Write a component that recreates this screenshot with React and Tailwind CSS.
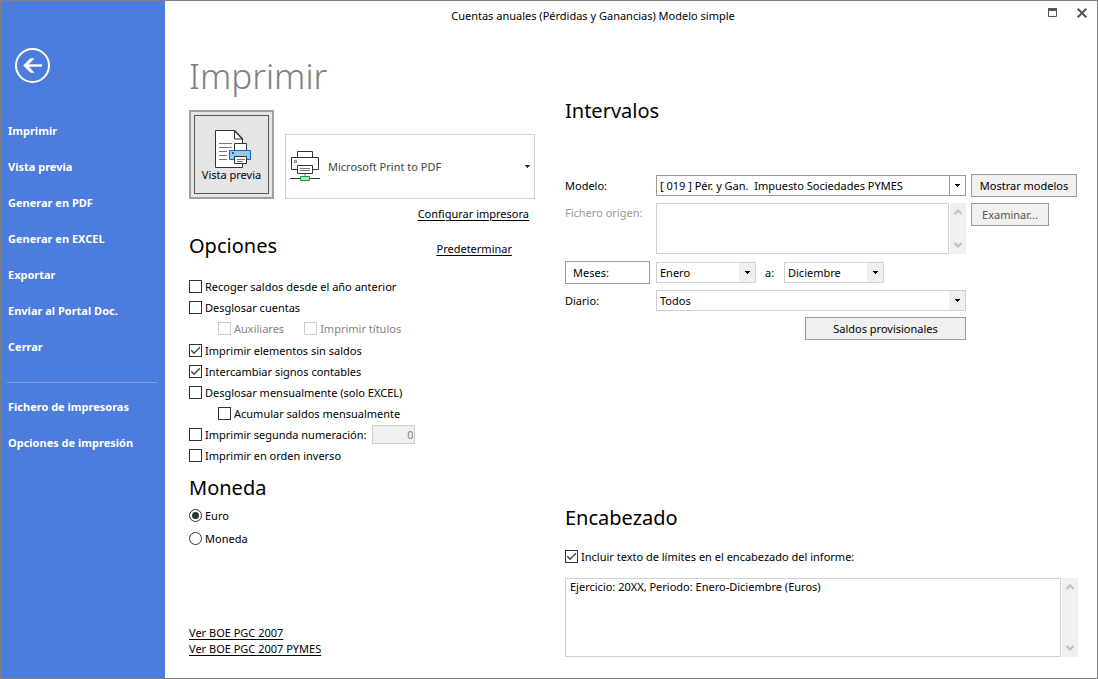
import React, { useState } from 'react';

const menuItems = [
  'Imprimir',
  'Vista previa',
  'Generar en PDF',
  'Generar en EXCEL',
  'Exportar',
  'Enviar al Portal Doc.',
  'Cerrar',
];

const setupItems = ['Fichero de impresoras', 'Opciones de impresión'];

const months = [
  'Enero', 'Febrero', 'Marzo', 'Abril', 'Mayo', 'Junio',
  'Julio', 'Agosto', 'Septiembre', 'Octubre', 'Noviembre', 'Diciembre',
];

const Check = ({ label, checked, onChange, disabled = false }) => (
  <label className={`flex h-[21px] items-center gap-[3px] whitespace-nowrap ${disabled ? 'text-[#838383]' : ''}`}>
    <span className="grid shrink-0">
      <input
        type="checkbox"
        checked={checked}
        onChange={onChange}
        disabled={disabled}
        className="peer col-start-1 row-start-1 h-[13px] w-[13px] appearance-none border border-[#333] bg-white disabled:border-[#ccc]"
      />
      <svg viewBox="0 0 13 13" className="pointer-events-none col-start-1 row-start-1 hidden h-[13px] w-[13px] peer-checked:block" fill="none" stroke="#444" strokeWidth="1.4">
        <path d="M2.3 6.3 5 9.2 10.9 3.3" />
      </svg>
    </span>
    {label}
  </label>
);

const Radio = ({ label, value, current, onChange }) => (
  <label className="flex h-[23px] items-center gap-[3px]">
    <span className="grid shrink-0">
      <input
        type="radio"
        name="moneda"
        value={value}
        checked={current === value}
        onChange={() => onChange(value)}
        className="peer col-start-1 row-start-1 h-[13px] w-[13px] appearance-none rounded-full border border-[#333] bg-white"
      />
      <span className="pointer-events-none col-start-1 row-start-1 hidden h-[7px] w-[7px] place-self-center rounded-full bg-[#333] peer-checked:block"></span>
    </span>
    {label}
  </label>
);

const Select = ({ id, label, options, value, onChange, className = '', frame = 'border-[#d0d0d0]', arrow = 'bg-[#f0f0f0]' }) => (
  <div className={`relative h-[21px] border bg-white ${frame} ${className}`}>
    <select
      id={id}
      aria-label={label}
      value={value}
      onChange={(e) => onChange(e.target.value)}
      className="block h-full w-full appearance-none whitespace-pre bg-transparent pr-5 pl-[3px] outline-none"
    >
      {options.map((o) => <option key={o} value={o}>{o}</option>)}
    </select>
    <span className={`pointer-events-none absolute inset-y-0 right-0 flex w-4 items-center justify-center ${arrow}`}>
      <svg width="5" height="3" viewBox="0 0 5 3" shapeRendering="crispEdges"><path d="M0 0h5v1H4v1H3v1H2V2H1V1H0z" /></svg>
    </span>
  </div>
);

// Disabled scroll bar shown beside the multi-line boxes
const ScrollTrack = () => (
  <div className="ml-px flex w-4 shrink-0 flex-col items-center justify-between bg-[#f0f0f0] py-[6px]">
    <svg width="8" height="6" viewBox="0 0 8 6" fill="none" stroke="#bfbfbf" strokeWidth="2"><path d="M.5 5 4 1.5 7.5 5" /></svg>
    <svg width="8" height="6" viewBox="0 0 8 6" fill="none" stroke="#bfbfbf" strokeWidth="2"><path d="M.5 1 4 4.5 7.5 1" /></svg>
  </div>
);

const PreviewIcon = () => (
  <svg width="37" height="38" viewBox="0 0 37 38" fill="none" className="ml-1">
    <path d="M.5.5h19l8 8v29H.5z" fill="#fff" stroke="#333" />
    <path d="M19.5.5v8.500h8" stroke="#333" />
    <path d="M19.500.5l8 8.500" stroke="#333" strokeWidth="1.5" />
    <path d="M4 13.500h13M4 17.500h13M4 21.500h8M4 25.500h8M4 29.500h8" stroke="#777" />
    <path d="M19.500 13.500h12v7h-12z" fill="#fff" stroke="#333" />
    <path d="M14.500 20.500h21v9h-21z" fill="#94c8ef" stroke="#0f64b4" />
    <path d="M17 22h2v2h-2z" fill="#0f64b4" />
    <path d="M19.500 26.500h12v7h-12z" fill="#fff" stroke="#333" />
    <path d="M22 29.500h8M22 31.500h6" stroke="#777" />
  </svg>
);

const NetworkPrinterIcon = () => (
  <svg width="30" height="31" viewBox="0 0 30 31" fill="none">
    <path d="M7.500.5h15v6h-15z" fill="#fff" stroke="#333" />
    <path d="M1.500 6.500h27v12h-27z" fill="#fff" stroke="#333" />
    <path d="M4.500 9.500h2v2h-2z" stroke="#777" />
    <path d="M7.500 14.500h15v8h-15z" fill="#fff" stroke="#333" />
    <path d="M10 17.500h10M10 19.500h10" stroke="#777" />
    <path d="M15 23v2" stroke="#bbb" strokeWidth="2" />
    <path d="M0 27.500h30" stroke="#333" />
    <path d="M10.500 25.500h9v4h-9z" fill="#b5e3c0" stroke="#109b3c" />
  </svg>
);

const buttonClass = 'h-[23px] border border-[#999] bg-[#f0f0f0] text-center';

export default function App() {
  const [options, setOptions] = useState({ sinSaldos: true, signos: true, limites: true });
  const [currency, setCurrency] = useState('euro');
  const [model, setModel] = useState('[ 019 ] Pér. y Gan.\u00a0 Impuesto Sociedades PYMES');
  const [from, setFrom] = useState('Enero');
  const [to, setTo] = useState('Diciembre');
  const [journal, setJournal] = useState('Todos');
  const [headerText, setHeaderText] = useState('Ejercicio: 20XX, Periodo: Enero-Diciembre (Euros)');

  const option = (key) => ({
    checked: !!options[key],
    onChange: () => setOptions((prev) => ({ ...prev, [key]: !prev[key] })),
  });

  return (
    <div className="flex min-h-screen border border-[#808080] bg-white font-['Noto_Sans','Open_Sans',sans-serif] text-[11px] leading-4 text-black">
      {/* Menu */}
      <nav className="w-[164px] shrink-0 bg-[#4c7cdc] pt-[47px] text-white">
        <button aria-label="Volver" className="ml-[14px] block">
          <svg width="35" height="35" viewBox="0 0 35 35" fill="none" stroke="#fff">
            <circle cx="17.500" cy="17.500" r="16.500" strokeWidth="2" />
            <path d="M27 17.500H11" strokeWidth="2.400" />
            <path d="M19 10.500h-3.500l-7 7 7 7H19l-6.500-7z" fill="#fff" strokeWidth=".5" />
          </svg>
        </button>
        <ul className="mt-[30px] font-bold">
          {menuItems.map((item) => (
            <li key={item}><button className="block h-9 w-full pl-[7px] text-left">{item}</button></li>
          ))}
        </ul>
        <hr className="mt-[17px] mr-2 ml-[6px] border-[#7a9de5]" />
        <ul className="mt-[6px] font-bold">
          {setupItems.map((item) => (
            <li key={item}><button className="block h-9 w-full pl-[7px] text-left">{item}</button></li>
          ))}
        </ul>
      </nav>

      <div className="flex min-w-0 flex-1 flex-col">
        {/* Title bar */}
        <header className="flex h-[31px] items-center">
          <p className="flex-1 pb-[2px] text-center">Cuentas anuales (Pérdidas y Ganancias) Modelo simple</p>
          <div className="flex w-[76px] items-center justify-end gap-5 pr-[10px] pb-2">
            <button aria-label="Maximizar">
              <svg width="9" height="9" viewBox="0 0 9 9" className="block"><path d="M.5.5h8v8h-8z" fill="none" stroke="#555" /><path d="M0 0h9v3H0z" fill="#555" /></svg>
            </button>
            <button aria-label="Cerrar ventana">
              <svg width="10" height="10" viewBox="0 0 10 10" className="block" fill="none" stroke="#555" strokeWidth="2"><path d="M.7.7l8.600 8.600M9.300.7.7 9.300" /></svg>
            </button>
          </div>
        </header>

        <main className="flex flex-1 gap-[30px] pt-5 pr-[19px] pb-[21px] pl-6">
          {/* Printer and options */}
          <section className="flex w-[346px] shrink-0 flex-col">
            <h1 className="text-[35px] leading-[48px] font-light text-[#808080]">Imprimir</h1>

            <div className="mt-[10px] flex items-end gap-[11px]">
              <button className="h-[89px] w-[85px] shrink-0 border-2 border-[#a0a0a0] bg-[#e5e5e5] p-[3px]">
                <span className="flex h-full flex-col items-center border border-[#555] pt-[14px] leading-[14px]">
                  <PreviewIcon />
                  Vista previa
                </span>
              </button>
              <button className="flex h-[65px] flex-1 items-center gap-2 border border-[#d0d0d0] pr-1 pl-1 text-left text-[#444]">
                <NetworkPrinterIcon />
                <span className="flex-1">Microsoft Print to PDF</span>
                <svg width="5" height="3" viewBox="0 0 5 3" shapeRendering="crispEdges"><path d="M0 0h5v1H4v1H3v1H2V2H1V1H0z" fill="#333" /></svg>
              </button>
            </div>

            <div className="mt-[7px] flex justify-end pr-[6px]">
              <a href="#configurar" className="underline underline-offset-2">Configurar impresora</a>
            </div>
            <div className="mt-[8px] flex items-center justify-between pr-[23px]">
              <h2 className="text-xl leading-8">Opciones</h2>
              <a href="#predeterminar" className="pt-[6px] underline underline-offset-2">Predeterminar</a>
            </div>

            <div className="mt-[14px]">
              <Check label="Recoger saldos desde el año anterior" {...option('recoger')} />
              <Check label="Desglosar cuentas" {...option('desglosar')} />
              <div className="flex gap-5 pb-px pl-[29px]">
                <Check label="Auxiliares" {...option('auxiliares')} disabled />
                <Check label="Imprimir títulos" {...option('titulos')} disabled />
              </div>
              <Check label="Imprimir elementos sin saldos" {...option('sinSaldos')} />
              <Check label="Intercambiar signos contables" {...option('signos')} />
              <Check label="Desglosar mensualmente (solo EXCEL)" {...option('mensual')} />
              <div className="pl-[29px]">
                <Check label="Acumular saldos mensualmente" {...option('acumular')} />
              </div>
              <div className="flex h-[21px] items-center gap-[6px]">
                <Check label="Imprimir segunda numeración:" {...option('segunda')} />
                <input
                  aria-label="Segunda numeración"
                  defaultValue="0"
                  disabled
                  className="h-[19px] w-[43px] border border-[#ccc] bg-[#f0f0f0] pr-px text-right text-[#838383]"
                />
              </div>
              <Check label="Imprimir en orden inverso" {...option('inverso')} />
            </div>

            <h2 className="mt-[6px] text-xl leading-8">Moneda</h2>
            <div>
              <Radio label="Euro" value="euro" current={currency} onChange={setCurrency} />
              <Radio label="Moneda" value="moneda" current={currency} onChange={setCurrency} />
            </div>

            <div className="mt-auto flex flex-col items-start">
              <a href="#boe" className="underline underline-offset-2">Ver BOE PGC 2007</a>
              <a href="#boe-pymes" className="underline underline-offset-2">Ver BOE PGC 2007 PYMES</a>
            </div>
          </section>

          {/* Ranges and report header */}
          <section className="flex min-w-0 flex-1 flex-col pt-[43px]">
            <h2 className="text-xl leading-8">Intervalos</h2>

            <div className="mt-[47px] mr-px grid grid-cols-[91px_1fr_111px] gap-y-[6px]">
              <label htmlFor="modelo" className="self-center">Modelo:</label>
              <Select
                id="modelo"
                options={['[ 019 ] Pér. y Gan.\u00a0 Impuesto Sociedades PYMES']}
                value={model}
                onChange={setModel}
                className="self-center"
                frame="border-[#999]"
                arrow="border-l border-[#999] bg-white"
              />
              <button className={`ml-[5px] ${buttonClass}`}>Mostrar modelos</button>

              <label htmlFor="fichero" className="pt-[2px] text-[#999]">Fichero origen:</label>
              <div className="flex h-[52px] pb-px">
                <textarea id="fichero" disabled className="block min-w-0 flex-1 resize-none overflow-hidden border border-[#d0d0d0] bg-white px-1"></textarea>
                <ScrollTrack />
              </div>
              <button disabled className={`ml-[5px] w-[78px] text-[#555] ${buttonClass}`}>Examinar...</button>

              <button className="mr-[6px] h-[23px] border border-[#999] bg-white pl-[7px] text-left">Meses:</button>
              <div className="col-span-2 flex items-center">
                <Select label="Mes inicial" options={months} value={from} onChange={setFrom} className="w-[100px]" />
                <label htmlFor="hasta" className="w-7 pl-[9px]">a:</label>
                <Select id="hasta" options={months} value={to} onChange={setTo} className="w-[100px]" />
              </div>

              <label htmlFor="diario" className="self-center">Diario:</label>
              <Select id="diario" options={['Todos']} value={journal} onChange={setJournal} />

              <button className={`col-start-2 w-[161px] justify-self-end ${buttonClass}`}>Saldos provisionales</button>
            </div>

            <div className="mt-auto">
              <h2 className="text-xl leading-8">Encabezado</h2>
              <div className="mt-3">
                <Check label="Incluir texto de límites en el encabezado del informe:" {...option('limites')} />
              </div>
              <div className="mt-[11px] flex h-[79px]">
                <textarea
                  aria-label="Texto del encabezado"
                  value={headerText}
                  onChange={(e) => setHeaderText(e.target.value)}
                  className="block min-w-0 flex-1 resize-none overflow-hidden border border-[#d0d0d0] bg-white px-1 outline-none"
                />
                <ScrollTrack />
              </div>
            </div>
          </section>
        </main>
      </div>
    </div>
  );
}
